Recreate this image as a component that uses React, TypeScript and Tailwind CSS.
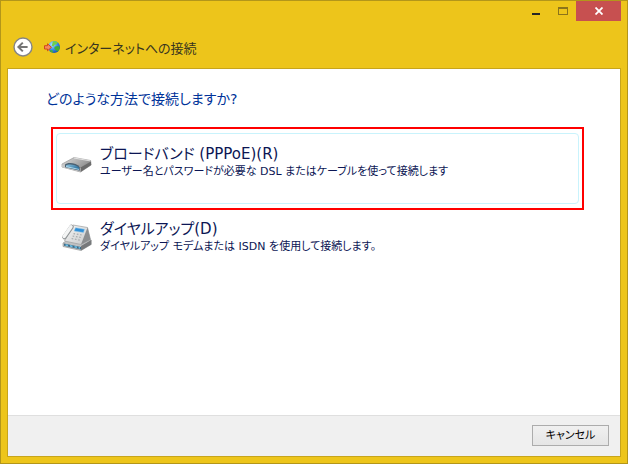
import type { ReactNode } from "react";

function BackIcon() {
  return (
    <svg width="20" height="20" viewBox="0 0 20 20" fill="none" aria-hidden="true">
      <circle cx="10" cy="10" r="9" fill="#fff" stroke="#858585" strokeWidth="1.4" />
      <path d="M14.6 10H6M9.8 5.600 5.400 10l4.400 4.400" stroke="#757575" strokeWidth="2" />
    </svg>
  );
}

function GlobeIcon() {
  return (
    <svg width="16" height="14" viewBox="0 0 16 14" aria-hidden="true">
      <defs>
        <radialGradient id="globe" cx="0.35" cy="0.3" r="0.8">
          <stop offset="0" stopColor="#b5e6ff" />
          <stop offset="0.5" stopColor="#3a92ee" />
          <stop offset="1" stopColor="#16459f" />
        </radialGradient>
      </defs>
      <circle cx="10" cy="6" r="6" fill="url(#globe)" />
      <path d="M9 .6c2-.6 3.600-.2 4.800 1l-1.200 1.700-2 .4-.9 1.800-2-.8z" fill="#6fd04a" />
      <path d="M10.500 5.700l3-.8 2.300.9c0 2-.8 3.600-2.200 4.700l-1.600-1.200-1.600-1.600z" fill="#3fae35" />
      <path d="M6.600 9l2 .6.6 2.200c-1.400-.2-2.600-1-3.400-2z" fill="#48b038" />
      <path d="M.5 4.700h3V2.800L7.500 6.300 3.500 9.800V8h-3z" fill="#f58a5c" stroke="#d0481c" strokeWidth="1" />
    </svg>
  );
}

function ModemIcon() {
  return (
    <svg width="32" height="32" viewBox="0 -2 32 32" aria-hidden="true">
      <defs>
        <linearGradient id="modemTop" x1="0" y1="0" x2="1" y2="0.6">
          <stop offset="0" stopColor="#dadada" />
          <stop offset="0.6" stopColor="#a9a9a9" />
          <stop offset="1" stopColor="#858585" />
        </linearGradient>
        <linearGradient id="modemFace" x1="0" y1="0" x2="1" y2="0.6">
          <stop offset="0" stopColor="#8fc4e0" />
          <stop offset="1" stopColor="#2b6f9c" />
        </linearGradient>
      </defs>
      <path d="M1 14 13 7.500l16.600 3 .6 4.500-10.700 7L1 17z" fill="url(#modemTop)" stroke="#8f8f8f" strokeWidth="0.6" />
      <path d="M19.500 17.500 30 11.500V15l-10.500 7z" fill="#6b6b6b" />
      <path d="M1 14.400 19.500 18v4L1 17.200z" fill="#c8c8c8" />
      <path d="M4 14.600c2-2.600 11.500-2.200 14.800 2.600v3.600L4 17.200z" fill="#4b6172" />
      <path d="M5 15.400c2.500-1.600 9.500-1.200 13 2.200v2.400L5 17z" fill="url(#modemFace)" />
      <path d="M5 16.600 18 19.400" stroke="#c4e8f7" strokeWidth="0.8" />
      <path d="M13 8 29.200 10.900" stroke="#efefef" strokeWidth="0.8" />
    </svg>
  );
}

function PhoneIcon() {
  return (
    <svg width="32" height="32" viewBox="0 1 32 32" aria-hidden="true">
      <defs>
        <linearGradient id="phoneBody" x1="0" y1="0" x2="1" y2="1">
          <stop offset="0" stopColor="#f8f8f8" />
          <stop offset="1" stopColor="#c3c5c6" />
        </linearGradient>
      </defs>
      <path d="m2 21 8-5L30.200 18v4.500L20 28.500 2 24.500z" fill="#bfc1c2" stroke="#8b8e8f" strokeWidth="0.6" />
      <path d="m20 24 10.200-6v4.500l-10.200 6z" fill="#77797b" />
      <path d="m12 3 14.500 2.500L29.500 17.500 20 22.500 3.500 19z" fill="url(#phoneBody)" stroke="#9c9fa1" strokeWidth="0.7" />
      <path d="m26.500 5.500 3 12-9.500 5z" fill="#8b8d8f" />
      <path d="m14.500 5.700 9 1.600-1 3.200-9.300-1.500z" fill="#2f8fd8" stroke="#8fc6e8" strokeWidth="0.5" />
      <path d="m12.500 11.600 1.600.3m1.700.2 1.600.3m1.700.3 1.600.3M11.600 14l1.600.3m1.700.3 1.600.3m1.700.3 1.600.3M10.600 16.500l1.600.4m1.700.3 1.600.3m1.700.3 1.600.3" stroke="#a8acae" strokeWidth="1.200" />
      <path d="M10.500 5 3.500 15" stroke="#909496" strokeWidth="4.600" strokeLinecap="round" />
      <path d="M10 4.700 3.200 14.500" stroke="#f4f5f5" strokeWidth="3.400" strokeLinecap="round" />
      <path d="m3 21.500 17 3.500v2.500L3 23.800z" fill="#3d6b88" />
      <path d="m4.500 22.900 2.500.5m2 .4 2.500.6m2 .4 2.500.5m1.600.4 1.400.3" stroke="#6fc4ea" strokeWidth="1.500" />
    </svg>
  );
}

type OptionProps = { icon: ReactNode; title: string; description: string; focused?: boolean };

function ConnectionOption({ icon, title, description, focused }: OptionProps) {
  return (
    <button
      type="button"
      className={`flex w-full items-start gap-[7px] rounded-sm border px-1 text-left text-[#0c1654] ${
        focused ? "h-[71px] border-[#c9f3fc] pt-2.5" : "border-transparent pt-2"
      }`}
    >
      <span className="shrink-0 pt-1">{icon}</span>
      <span className="flex min-w-0 flex-col">
        <span className="text-[15px] leading-5">{title}</span>
        <span className="text-[11px] leading-4">{description}</span>
      </span>
    </button>
  );
}

export default function App() {
  return (
    <div className="flex min-h-screen flex-col border border-[#b3961a] bg-[#edc51b] px-1.5 pb-1.5 font-['DejaVu_Sans','Noto_Sans_CJK_JP',sans-serif] [font-feature-settings:'palt']">
      <div className="flex h-8 items-start justify-end">
        <button type="button" aria-label="最小化" className="flex h-5 w-[26px] items-end justify-center pb-1.5">
          <span className="h-0.5 w-2 bg-[#262626]" />
        </button>
        <button type="button" aria-label="最大化" disabled className="flex h-5 w-[27px] items-center justify-center">
          <span className="h-2 w-2.5 border border-t-2 border-[#8b741b]" />
        </button>
        <button type="button" aria-label="閉じる" className="flex h-5 w-[45px] items-center justify-center bg-[#c75050]">
          <svg width="8" height="8" viewBox="0 0 8 8" aria-hidden="true">
            <path d="m.5.5 7 7m0-7-7 7" stroke="#fff" strokeWidth="1.800" />
          </svg>
        </button>
      </div>

      <header className="flex h-[35px] items-start pl-1.5 pt-1">
        <button type="button" aria-label="戻る">
          <BackIcon />
        </button>
        <span className="ml-[11px] pt-1">
          <GlobeIcon />
        </span>
        <h1 className="ml-[5px] pt-0.5 text-[13px] leading-5 text-[#38351f]">インターネットへの接続</h1>
      </header>

      <div className="flex grow flex-col border border-[#c7a51b] bg-white">
        <main className="grow pl-[38px] pr-9 pt-5">
          <h2 className="text-[14px] leading-5 text-[#003399]">どのような方法で接続しますか?</h2>
          <div className="ml-[5px] mt-[18px]">
            <div className="border-2 border-[#ff0000] px-[3px] py-1">
              <ConnectionOption
                focused
                icon={<ModemIcon />}
                title="ブロードバンド (PPPoE)(R)"
                description="ユーザー名とパスワードが必要な DSL またはケーブルを使って接続します"
              />
            </div>
            <div className="px-[5px]">
              <ConnectionOption
                icon={<PhoneIcon />}
                title="ダイヤルアップ(D)"
                description="ダイヤルアップ モデムまたは ISDN を使用して接続します。"
              />
            </div>
          </div>
        </main>
        <footer className="flex h-[41px] items-start justify-end border-t border-[#dfdfdf] bg-[#f0f0f0] pr-[11px] pt-[9px]">
          <button
            type="button"
            className="h-[21px] w-[77px] border border-[#acacac] bg-linear-to-b from-[#f0f0f0] to-[#e5e5e5] text-[11px] leading-4 text-black"
          >
            キャンセル
          </button>
        </footer>
      </div>
    </div>
  );
}
